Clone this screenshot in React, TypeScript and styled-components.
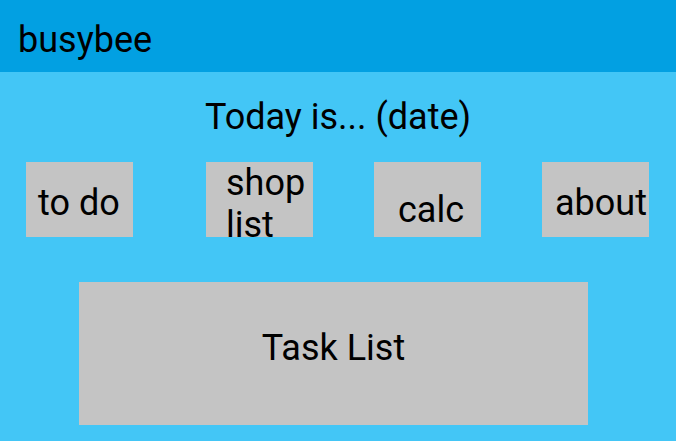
import React from "react"
import styled, { createGlobalStyle } from "styled-components"

const GlobalStyle = createGlobalStyle`
  html, body {
    margin: 0;
    padding: 0;
    background-color: #ffffff;
  }

  body {
    font-family: Roboto, "Noto Sans", sans-serif;
    color: #000;
  }
`

interface INavItem {
  label: string
  offset: number
  padTop: number
  padLeft: number
}

const navItems: INavItem[] = [
  { label: "to do", offset: 0, padTop: 20, padLeft: 12 },
  { label: "shop list", offset: 73, padTop: 0, padLeft: 20 },
  { label: "calc", offset: 61, padTop: 27, padLeft: 24 },
  { label: "about", offset: 61, padTop: 20, padLeft: 13 },
]

const App: React.FC = () => {
  return (
    <>
      <GlobalStyle />
      <Screen>
        <AppBar>
          <AppTitle>busybee</AppTitle>
        </AppBar>
        <DateLine>Today is... (date)</DateLine>
        <NavRow>
          {navItems.map((item) => (
            <NavButton
              key={item.label}
              $offset={item.offset}
              $padTop={item.padTop}
              $padLeft={item.padLeft}
            >
              {item.label}
            </NavButton>
          ))}
        </NavRow>
        <TaskList>Task List</TaskList>
      </Screen>
    </>
  )
}

const Screen = styled.div`
  display: flex;
  flex-direction: column;

  width: 676px;
  height: 441px;
  overflow: hidden;

  background-color: #43c6f6;
`

const AppBar = styled.div`
  display: flex;
  flex-direction: row;

  box-sizing: border-box;
  height: 72px;
  padding: 19px 0 0 18px;

  background-color: #02a0e2;
`

const AppTitle = styled.div`
  font-size: 36px;
  line-height: 42px;
`

const DateLine = styled.div`
  margin-top: 24px;

  font-size: 36px;
  line-height: 42px;
  text-align: center;
`

const NavRow = styled.div`
  display: flex;
  flex-direction: row;

  margin-top: 24px;
  padding-left: 26px;
`

const NavButton = styled.div<{ $offset: number; $padTop: number; $padLeft: number }>`
  box-sizing: border-box;
  width: 107px;
  height: 75px;
  margin-left: ${(p) => p.$offset}px;
  padding: ${(p) => p.$padTop}px 0 0 ${(p) => p.$padLeft}px;
  overflow: hidden;

  background-color: #c4c4c4;

  font-size: 36px;
  line-height: 42px;
  user-select: none;
`

const TaskList = styled.div`
  box-sizing: border-box;
  width: 509px;
  height: 143px;
  margin: 45px 0 0 79px;
  padding-top: 45px;

  background-color: #c4c4c4;

  font-size: 36px;
  line-height: 42px;
  text-align: center;
`

export default App
